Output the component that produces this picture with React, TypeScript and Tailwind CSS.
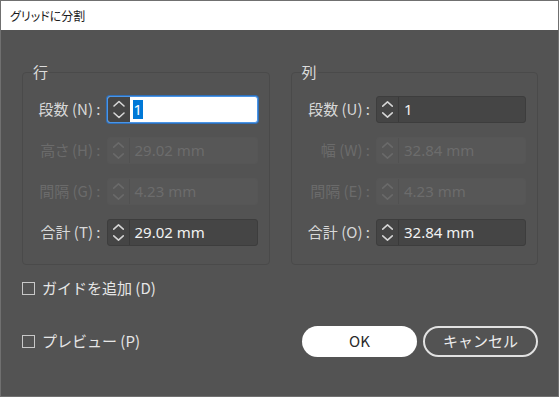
import React from "react";

const jp = "font-['Noto_Sans_CJK_JP',sans-serif] [font-feature-settings:'palt']";
const jpw = "font-['Noto_Sans_CJK_JP',sans-serif]";

function Chevrons({ color }: { color: string }) {
  return (
    <svg width="22" height="25" viewBox="0 0 22 25" fill="none">
      <polyline points="6,9 11,4.5 16,9" stroke={color} strokeWidth="1.6" strokeLinecap="round" strokeLinejoin="round" />
      <polyline points="6,16 11,20.5 16,16" stroke={color} strokeWidth="1.6" strokeLinecap="round" strokeLinejoin="round" />
    </svg>
  );
}

function Spinner({ value, disabled, focused, w }: { value: string; disabled?: boolean; focused?: boolean; w: string }) {
  if (focused) {
    return (
      <div className={`${w} h-[27px] flex rounded-[3px] border border-[#4b95e6] shadow-[0_0_0_1px_#2f6fb8] bg-white overflow-hidden`}>
        <div className="w-[22px] h-full bg-[#454545] flex items-center justify-center">
          <Chevrons color="#d6d6d6" />
        </div>
        <div className="flex-1 flex items-center pl-[3px]">
          <span className="bg-[#0078d7] text-white text-[15px] leading-[19px] px-[1px] font-['Noto_Sans',sans-serif]">{value}</span>
        </div>
      </div>
    );
  }
  if (disabled) {
    return (
      <div className={`${w} h-[27px] flex rounded-[3px] border border-[#565656] bg-[#575757] overflow-hidden`}>
        <div className="w-[22px] h-full border-r border-[#515151] flex items-center justify-center">
          <Chevrons color="#6a6a6a" />
        </div>
        <div className="flex-1 flex items-center pl-[5px] text-[15px] text-[#6c6c6c] font-['Noto_Sans',sans-serif]">{value}</div>
      </div>
    );
  }
  return (
    <div className={`${w} h-[27px] flex rounded-[3px] border border-[#3d3d3d] bg-[#454545] overflow-hidden`}>
      <div className="w-[22px] h-full border-r border-[#3a3a3a] flex items-center justify-center">
        <Chevrons color="#d6d6d6" />
      </div>
      <div className="flex-1 flex items-center pl-[5px] text-[15px] text-[#f2f2f2] font-['Noto_Sans',sans-serif]">{value}</div>
    </div>
  );
}

type RowDef = { label: string; value: string; disabled?: boolean; focused?: boolean };

function Row({ r, w }: { r: RowDef; w: string }) {
  return (
    <div className="flex items-center h-[27px]">
      <div className={`flex-1 text-right pr-[6px] text-[15px] whitespace-nowrap ${jp} ${r.disabled ? "text-[#6b6b6b]" : "text-[#d8d8d8]"}`}>
        {r.label}
      </div>
      <Spinner value={r.value} disabled={r.disabled} focused={r.focused} w={w} />
    </div>
  );
}

function Group({ title, rows, w }: { title: string; rows: RowDef[]; w: string }) {
  return (
    <fieldset className="flex-1 border border-[#4a4a4a] rounded-[4px] px-[11px] pt-[14px] pb-[18px] flex flex-col gap-[14px]">
      <legend className={`ml-[-2px] px-[1px] text-[15px] leading-[20px] text-[#dcdcdc] ${jp}`}>{title}</legend>
      {rows.map((r, i) => (
        <Row key={i} r={r} w={w} />
      ))}
    </fieldset>
  );
}

function Check({ label }: { label: string }) {
  return (
    <div className="flex items-center gap-[7px]">
      <div className="w-[13px] h-[13px] border border-[#c8c8c8]" />
      <span className={`text-[15px] text-[#e6e6e6] ${jpw}`}>{label}</span>
    </div>
  );
}

export default function App() {
  return (
    <div className="w-[559px] h-[397px] border border-[#707070] bg-[#535353] flex flex-col overflow-hidden">
      <div className="h-[29px] bg-white flex items-center pl-[9px] shrink-0">
        <span className={`text-[12px] text-[#1a1a1a] ${jp}`}>グリッドに分割</span>
      </div>
      <div className="flex-1 pl-[21px] pr-[20px] pt-[32px] flex flex-col">
        <div className="flex gap-[21px]">
          <Group
            title="行"
            w="w-[151px]"
            rows={[
              { label: "段数 (N) :", value: "1", focused: true },
              { label: "高さ (H) :", value: "29.02 mm", disabled: true },
              { label: "間隔 (G) :", value: "4.23 mm", disabled: true },
              { label: "合計 (T) :", value: "29.02 mm" },
            ]}
          />
          <Group
            title="列"
            w="w-[150px]"
            rows={[
              { label: "段数 (U) :", value: "1" },
              { label: "幅 (W) :", value: "32.84 mm", disabled: true },
              { label: "間隔 (E) :", value: "4.23 mm", disabled: true },
              { label: "合計 (O) :", value: "32.84 mm" },
            ]}
          />
        </div>
        <div className="mt-[13px] h-[20px] flex items-center">
          <Check label="ガイドを追加 (D)" />
        </div>
        <div className="mt-[28px] h-[31px] flex items-center">
          <Check label="プレビュー (P)" />
          <div className="ml-auto flex gap-[6px]">
            <button className={`w-[115px] h-[31px] rounded-full bg-white text-[15px] text-[#2a2a2a] ${jpw}`}>OK</button>
            <button className={`w-[115px] h-[31px] rounded-full border-2 border-[#e2e2e2] text-[15px] text-[#ececec] ${jpw}`}>キャンセル</button>
          </div>
        </div>
      </div>
    </div>
  );
}
